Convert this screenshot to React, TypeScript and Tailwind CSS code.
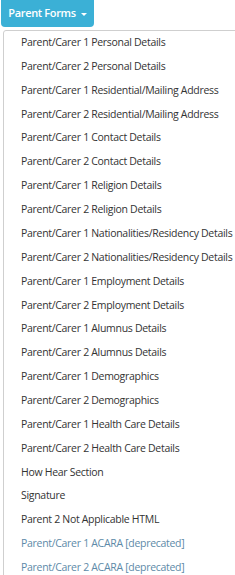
import React from "react";

const items = [
  "Parent/Carer 1 Personal Details",
  "Parent/Carer 2 Personal Details",
  "Parent/Carer 1 Residential/Mailing Address",
  "Parent/Carer 2 Residential/Mailing Address",
  "Parent/Carer 1 Contact Details",
  "Parent/Carer 2 Contact Details",
  "Parent/Carer 1 Religion Details",
  "Parent/Carer 2 Religion Details",
  "Parent/Carer 1 Nationalities/Residency Details",
  "Parent/Carer 2 Nationalities/Residency Details",
  "Parent/Carer 1 Employment Details",
  "Parent/Carer 2 Employment Details",
  "Parent/Carer 1 Alumnus Details",
  "Parent/Carer 2 Alumnus Details",
  "Parent/Carer 1 Demographics",
  "Parent/Carer 2 Demographics",
  "Parent/Carer 1 Health Care Details",
  "Parent/Carer 2 Health Care Details",
  "How Hear Section",
  "Signature",
  "Parent 2 Not Applicable HTML",
];

const deprecated = ["Parent/Carer 1 ACARA [deprecated]", "Parent/Carer 2 ACARA [deprecated]"];

export default function App() {
  return (
    <div
      className="relative w-[235px] h-[575px] overflow-hidden bg-white"
      style={{ fontFamily: '"Open Sans", "Noto Sans", sans-serif' }}
    >
      {/* Toggle button */}
      <div className="pl-[1px]">
        <button className="h-[27px] w-[93px] rounded-b-[4px] bg-[#3bb0d6] text-white text-[11px] tracking-[-0.35px] font-semibold flex items-center justify-center gap-[5px]">
          Parent Forms
          <span className="w-0 h-0 border-l-[3px] border-r-[3px] border-t-[3px] border-l-transparent border-r-transparent border-t-white mt-[1px]" />
        </button>
      </div>

      {/* Dropdown menu */}
      <div className="absolute left-[3px] top-[30px] w-[240px] bg-white border border-[#cfcfcf] rounded-[3px]">
        {items.map((label) => (
          <div key={label} className="h-[23.86px] flex items-center pl-[17px] text-[10.5px] tracking-[-0.3px] text-[#333333] whitespace-nowrap">
            {label}
          </div>
        ))}
        {deprecated.map((label) => (
          <div key={label} className="h-[23.86px] flex items-center pl-[17px] text-[10.5px] tracking-[-0.3px] text-[#5d8aa8] whitespace-nowrap">
            {label}
          </div>
        ))}
      </div>
    </div>
  );
}
